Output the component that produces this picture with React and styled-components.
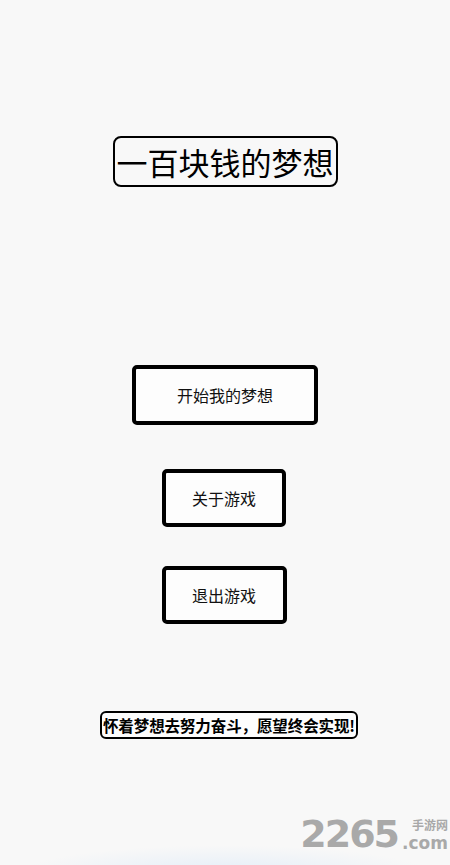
import React from 'react';
import styled, { createGlobalStyle } from 'styled-components';

const GlobalStyle = createGlobalStyle`
  html, body {
    margin: 0;
    padding: 0;
    background: #f8f8f8;
  }
  body {
    font-family: 'Noto Sans CJK SC', 'Noto Sans', sans-serif;
  }
`;

const Screen = styled.div`
  position: relative;
  width: 450px;
  height: 865px;
  overflow: hidden;
  display: flex;
  flex-direction: column;
  align-items: center;
  padding-top: 136px;
  box-sizing: border-box;
  background: #f8f8f8;
`;

const Title = styled.div`
  box-sizing: border-box;
  height: 51px;
  padding: 0 2px;
  border: 2px solid #000;
  border-radius: 8px;
  display: flex;
  align-items: center;
  font-size: 31px;
  line-height: 1;
  color: #000;
  white-space: nowrap;
`;

const Menu = styled.div`
  display: flex;
  flex-direction: column;
  align-items: center;
  margin-top: 178px;
`;

const MenuButton = styled.button`
  box-sizing: border-box;
  width: ${p => p.$w}px;
  height: ${p => p.$h}px;
  margin-top: ${p => p.$top || 0}px;
  margin-right: ${p => p.$shift || 0}px;
  border: 4px solid #000;
  border-radius: 5px;
  background: #fdfdfd;
  font-family: 'Noto Sans CJK SC', 'Noto Sans', sans-serif;
  font-size: 16px;
  color: #111;
  cursor: pointer;
  padding: 0;
`;

const Slogan = styled.div`
  box-sizing: border-box;
  margin-top: 87px;
  margin-left: 8px;
  height: 28px;
  width: 258px;
  border: 2px solid #000;
  border-radius: 6px;
  background: #fdfdfd;
  display: flex;
  align-items: center;
  justify-content: center;
  font-size: 15.5px;
  font-weight: 700;
  color: #000;
  white-space: nowrap;
  letter-spacing: -0.1px;
`;

const Watermark = styled.div`
  position: absolute;
  right: 2px;
  bottom: 12px;
  display: flex;
  align-items: flex-end;
  gap: 4px;
  color: #a9a9a9;
  font-family: 'DejaVu Sans', sans-serif;
`;

const Digits = styled.span`
  font-size: 38px;
  font-weight: 700;
  letter-spacing: -2px;
  line-height: 1;
`;

const Site = styled.span`
  display: flex;
  flex-direction: column;
  align-items: flex-end;
`;

const SiteName = styled.span`
  font-family: 'Noto Sans CJK SC', sans-serif;
  font-size: 12px;
  font-weight: 700;
  line-height: normal;
`;

const SiteDomain = styled.span`
  font-size: 17px;
  font-weight: 700;
  line-height: normal;
`;

const Glow = styled.div`
  position: absolute;
  left: 50%;
  bottom: -40px;
  width: 420px;
  height: 60px;
  transform: translateX(-50%);
  border-radius: 50%;
  background: radial-gradient(ellipse at center, rgba(225, 236, 248, 0.9), rgba(248, 248, 248, 0) 70%);
`;

export default function App() {
  return (
    <>
      <GlobalStyle />
      <Screen>
        <Title>一百块钱的梦想</Title>
        <Menu>
          <MenuButton $w={186} $h={60}>开始我的梦想</MenuButton>
          <MenuButton $w={124} $h={58} $top={44} $shift={2}>关于游戏</MenuButton>
          <MenuButton $w={125} $h={58} $top={39} $shift={2}>退出游戏</MenuButton>
        </Menu>
        <Slogan>怀着梦想去努力奋斗，愿望终会实现!</Slogan>
        <Glow />
        <Watermark>
          <Digits>2265</Digits>
          <Site>
            <SiteName>手游网</SiteName>
            <SiteDomain>.com</SiteDomain>
          </Site>
        </Watermark>
      </Screen>
    </>
  );
}
